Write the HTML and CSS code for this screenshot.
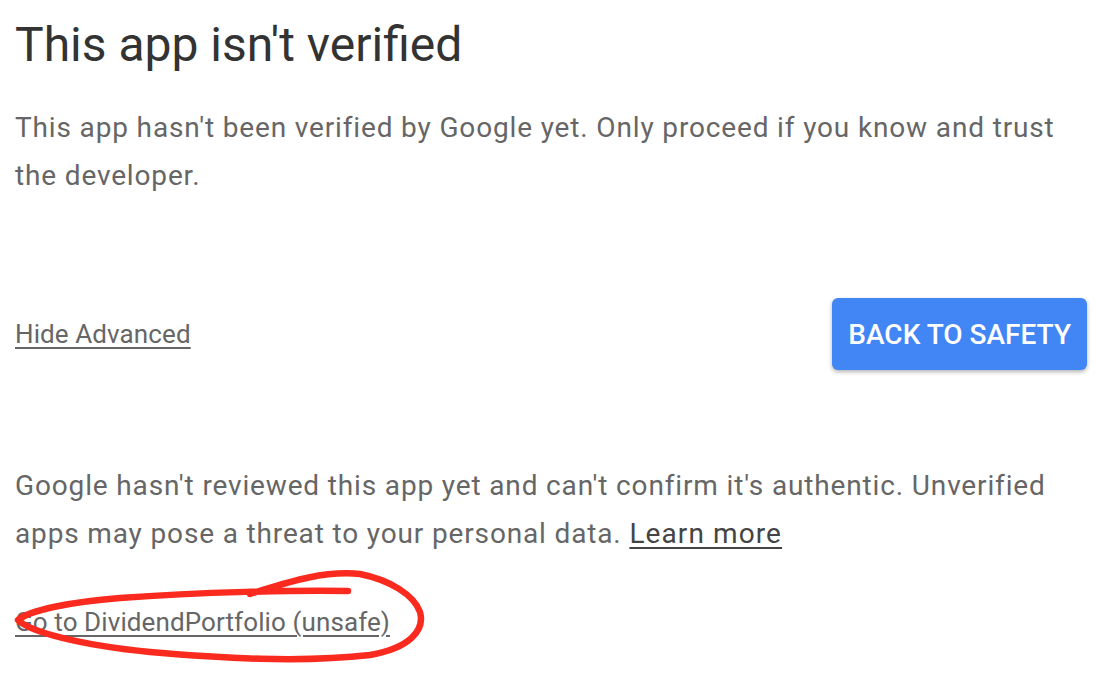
FILE: index.html
```html
<!DOCTYPE html>
<html>
<head>
<meta charset="utf-8">
<link rel="stylesheet" href="styles.css">
</head>
<body>
<main class="page">
  <h1 class="title">This app isn't verified</h1>
  <p class="text intro">This app hasn't been verified by Google yet. Only proceed if you know and trust the developer.</p>
  <div class="actions">
    <a class="link small" href="#">Hide Advanced</a>
    <button class="primary">BACK TO SAFETY</button>
  </div>
  <p class="text details">Google hasn't reviewed this app yet and can't confirm it's authentic. Unverified apps may pose a threat to your personal data. <a class="link dark" href="#">Learn more</a></p>
  <p class="text go"><a class="link small" href="#">Go to DividendPortfolio (unsafe)</a></p>
  <svg class="scribble" width="1106" height="692" viewBox="0 0 1106 692">
    <path d="M348,591 C300,590 200,592 120,598 C70,602 30,610 18,620 C30,632 80,645 150,652 C220,658 300,663 370,655 C410,648 425,630 420,612 C414,595 390,580 360,574 C320,570 280,585 250,594" fill="none" stroke="#fb2a1e" stroke-width="6.5" stroke-linecap="round" stroke-linejoin="round"/>
  </svg>
</main>
</body>
</html>
```
FILE: styles.css
```css
html, body {
  margin: 0;
  padding: 0;
  background: #fff;
}
body {
  font-family: Roboto, "Liberation Sans", sans-serif;
  width: 1106px;
  height: 692px;
  overflow: hidden;
}
.page {
  position: relative;
  padding: 17px 19px 0 15px;
  height: 692px;
  box-sizing: border-box;
}
.title {
  margin: 0;
  font-size: 48px;
  line-height: 56px;
  font-weight: 400;
  color: #333;
}
.text {
  margin: 0;
  font-size: 28px;
  line-height: 48px;
  letter-spacing: 0.85px;
  color: #666;
}
.intro {
  margin-top: 31px;
}
.actions {
  margin-top: 98px;
  display: flex;
  align-items: center;
  justify-content: space-between;
  height: 72px;
}
.link {
  font-size: 28px;
  color: #666;
  text-decoration: underline;
  text-underline-offset: 4px;
  text-decoration-thickness: 2px;
}
.link.small {
  font-size: 26px;
  letter-spacing: 0.1px;
}
.link.dark {
  color: #444;
  letter-spacing: 1.1px;
}
.primary {
  font-family: Roboto, "Liberation Sans", sans-serif;
  height: 72px;
  padding: 0 16px;
  border: 0;
  border-radius: 6px;
  background: #4285f4;
  color: #fff;
  font-size: 28px;
  font-weight: 500;
  box-shadow: 0 2px 4px rgba(0,0,0,0.3);
}
.details {
  margin-top: 92px;
}
.go {
  margin-top: 40px;
}
.scribble {
  position: absolute;
  left: 0;
  top: 0;
  pointer-events: none;
}
```
